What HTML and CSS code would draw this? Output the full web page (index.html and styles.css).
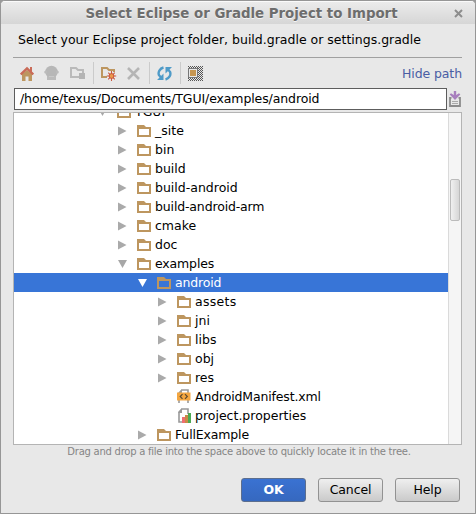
FILE: index.html
```html
<!DOCTYPE html>
<html lang="en">
<head>
<meta charset="utf-8">
<title>Select Eclipse or Gradle Project to Import</title>
<link rel="stylesheet" href="styles.css">
</head>
<body>
<svg class="defs" width="0" height="0" aria-hidden="true">
  <symbol id="folder" viewBox="0 0 14 12"><path fill="#bd965f" fill-rule="evenodd" d="M0 0H7L9 2H14V12H0ZM2 4V10H12V4Z"/></symbol>
  <symbol id="right" viewBox="0 0 9 10"><path fill="#aaa" d="M0 0.5L8.5 5L0 9.5Z"/></symbol>
  <symbol id="down" viewBox="0 0 9 10"><path fill="currentColor" d="M0 1H9L4.5 9Z"/></symbol>
</svg>
<div class="window">
  <header class="titlebar"><h1>Select Eclipse or Gradle Project to Import</h1>
    <svg class="close" width="9" height="9" viewBox="0 0 9 9"><path d="M1 1L8 8M8 1L1 8"/></svg>
  </header>
  <main class="content">
    <p class="prompt"><span>Select your Eclipse project folder, build.gradle or settings.gradle</span></p>
    <div class="toolbar">
      <svg class="home" width="14" height="15" viewBox="0 0 14 15"><path fill="#bd965f" d="M2 8L7 4L12 8V15H8.5V10.5H5.5V15H2Z"/><path fill="none" stroke="#c96b58" stroke-width="2.4" d="M.7 8.5L7 2.5L13.3 8.5"/><path fill="#c96b58" d="M10 1H12V7H10Z"/></svg>
      <svg class="project" width="15" height="16" viewBox="0 0 15 16"><circle cx="7.5" cy="7" r="6.2" fill="#b7b7b7"/><circle cx="1.8" cy="7" r="1.6" fill="#bbb"/><circle cx="13.2" cy="7" r="1.6" fill="#bbb"/><path fill="#bbb" d="M3 11H12V15H3Z"/><path fill="none" stroke="#c9c9c9" d="M5 11.5H10"/></svg>
      <svg class="module" width="16" height="14" viewBox="0 0 16 14"><path fill="none" stroke="#bababa" stroke-width="2" d="M9 11H1V2H6L8 4H13V7"/><path fill="#b4b4b4" d="M9 7H15V13H9Z"/></svg>
      <i class="divider"></i>
      <svg class="new" width="16" height="15" viewBox="0 0 16 15"><path fill="none" stroke="#bd965f" stroke-width="2" d="M6 11H1V2H6L8 4H13V6"/><path stroke="#c95a42" stroke-width="1.1" d="M10.5 5V15M5.8 10H15.2M7.2 6.7L13.8 13.3M13.8 6.7L7.2 13.3"/><circle cx="10.5" cy="10" r="2.4" fill="#eb9a4c" stroke="#c95038"/></svg>
      <svg class="delete" width="13" height="13" viewBox="0 0 13 13"><path fill="none" stroke="#b5b5b5" stroke-width="2.6" d="M1 1L12 12M12 1L1 12"/></svg>
      <i class="divider"></i>
      <svg class="refresh" width="15" height="15" viewBox="0 0 15 15"><g fill="none" stroke="#4f9bc8" stroke-width="2.4"><path d="M6.5 1.5C2.8 2.5 .7 6 2 9.2L4.5 12"/><path d="M8.5 13.5C12.2 12.5 14.3 9 13 5.8L10.5 3"/></g><path fill="#4f9bc8" d="M0 14H6.5V7.5ZM15 1H8.5V7.5Z"/></svg>
      <i class="divider"></i>
      <svg class="hidden" width="15" height="15" viewBox="0 0 15 15" shape-rendering="crispEdges"><defs><pattern id="checks" width="2" height="2" patternUnits="userSpaceOnUse"><path fill="#555" d="M0 0H1V1H0ZM1 1H2V2H1Z"/></pattern></defs><path fill="url(#checks)" d="M0 0H15V15H0Z"/><path fill="#e8e8e8" stroke="#777" d="M.5 2.5H9.5V11.5H.5Z"/><path fill="#c79650" d="M2 4H8V10H2Z"/></svg>
      <a class="hide">Hide path</a>
    </div>
    <div class="pathrow">
      <div class="path"><span>/home/texus/Documents/TGUI/examples/android</span></div>
      <svg width="12" height="16" viewBox="0 0 12 16"><path fill="none" stroke="#8c8c8c" stroke-width="1.8" d="M2.5 6.8H1V15H11V6.8H9.5"/><path stroke="#aaa" d="M3 10.5H9M3 12.5H9"/><path fill="#a87fbe" d="M4.8 0H7.2V4L10 2.2L11.3 3.6L6 9L.7 3.6L2 2.2L4.8 4Z"/></svg>
    </div>
    <div class="tree">
      <ul class="rows">
        <li class="l0"><svg class="arrow"><use href="#down"/></svg><svg class="icon"><use href="#folder"/></svg><span>TGUI</span></li>
        <li class="l1"><svg class="arrow"><use href="#right"/></svg><svg class="icon"><use href="#folder"/></svg><span>_site</span></li>
        <li class="l1"><svg class="arrow"><use href="#right"/></svg><svg class="icon"><use href="#folder"/></svg><span>bin</span></li>
        <li class="l1"><svg class="arrow"><use href="#right"/></svg><svg class="icon"><use href="#folder"/></svg><span>build</span></li>
        <li class="l1"><svg class="arrow"><use href="#right"/></svg><svg class="icon"><use href="#folder"/></svg><span>build-android</span></li>
        <li class="l1"><svg class="arrow"><use href="#right"/></svg><svg class="icon"><use href="#folder"/></svg><span class="tight">build-android-arm</span></li>
        <li class="l1"><svg class="arrow"><use href="#right"/></svg><svg class="icon"><use href="#folder"/></svg><span>cmake</span></li>
        <li class="l1"><svg class="arrow"><use href="#right"/></svg><svg class="icon"><use href="#folder"/></svg><span>doc</span></li>
        <li class="l1"><svg class="arrow"><use href="#down"/></svg><svg class="icon"><use href="#folder"/></svg><span class="tight">examples</span></li>
        <li class="l2 selected"><svg class="arrow"><use href="#down"/></svg><svg class="icon"><use href="#folder"/></svg><span class="tight">android</span></li>
        <li class="l3"><svg class="arrow"><use href="#right"/></svg><svg class="icon"><use href="#folder"/></svg><span class="loose">assets</span></li>
        <li class="l3"><svg class="arrow"><use href="#right"/></svg><svg class="icon"><use href="#folder"/></svg><span>jni</span></li>
        <li class="l3"><svg class="arrow"><use href="#right"/></svg><svg class="icon"><use href="#folder"/></svg><span>libs</span></li>
        <li class="l3"><svg class="arrow"><use href="#right"/></svg><svg class="icon"><use href="#folder"/></svg><span>obj</span></li>
        <li class="l3"><svg class="arrow"><use href="#right"/></svg><svg class="icon"><use href="#folder"/></svg><span>res</span></li>
        <li class="l3"><i class="arrow"></i><svg class="icon file" viewBox="0 0 14 15"><path fill="none" stroke="#999" stroke-width="1.6" d="M2 14V4L5 1H11V14"/><path fill="#999" d="M1 5L5 0V5Z"/><path fill="#f4a640" d="M0 3.5H13.5V11.5H0Z"/><path fill="none" stroke="#5c4a30" stroke-width="1.2" d="M5.5 5.2L3.2 7.5L5.5 9.8M8 5.2L10.3 7.5L8 9.8"/></svg><span class="tight">AndroidManifest.xml</span></li>
        <li class="l3"><i class="arrow"></i><svg class="icon file" viewBox="0 0 14 15"><path fill="none" stroke="#999" stroke-width="1.6" d="M5 14H2V4L5 1H11V6"/><path fill="#999" d="M1 5L5 0V5Z"/><path fill="#ef6e70" d="M5 9H8V15H5Z"/><path fill="#c78b48" d="M8 7H11V15H8Z"/><path fill="#4ca953" d="M11 5H14V15H11Z"/></svg><span>project.properties</span></li>
        <li class="l2"><svg class="arrow"><use href="#right"/></svg><svg class="icon"><use href="#folder"/></svg><span class="tight">FullExample</span></li>
      </ul>
      <div class="scrollbar"><div class="thumb"></div></div>
    </div>
    <p class="hint"><span>Drag and drop a file into the space above to quickly locate it in the tree.</span></p>
    <footer class="actions"><button class="ok">OK</button><button>Cancel</button><button>Help</button></footer>
  </main>
</div>
</body>
</html>
```
FILE: styles.css
```css
* { box-sizing: border-box; }
body { margin: 0; font: 12.5px/19px "DejaVu Sans", sans-serif; color: #000; background: #999; }
.defs { position: absolute; }
.window { width: 476px; height: 514px; border: 1px solid #969696; border-radius: 5px 5px 0 0; background: #e8e8e8; overflow: hidden; }
.titlebar { height: 23px; display: grid; grid-template-columns: 1fr 9px; align-items: center; padding: 0 12px 0 28px; background: linear-gradient(#ebebeb, #d6d6d6); border-top: 1px solid #fafafa; }
h1 { margin: 0; padding-top: 1px; text-align: center; white-space: nowrap; font-size: 13.35px; line-height: 20px; color: #6d6d6d; text-shadow: 0 1px #f5f5f5; }
.close { margin-top: 1px; fill: none; stroke: #8d8d8d; stroke-width: 2; }
.content { padding: 0 13px 0 12px; }
.prompt { margin: 0; height: 34px; padding: 6px 0 0 5px; border-bottom: 1px solid #a0a0a0; white-space: nowrap; }
.toolbar { height: 30px; display: flex; align-items: center; padding-left: 7px; }
.divider { width: 1px; height: 22px; background: #cbcbcb; }
.project { margin-left: 10px; }
.module { margin-left: 11px; }
.module + .divider { margin-left: 7px; }
.new { margin-left: 7px; }
.delete { margin-left: 10px; }
.delete + .divider { margin-left: 9px; }
.refresh { margin-left: 7px; }
.refresh + .divider { margin-left: 8px; }
.hidden { margin-left: 7px; }
.hide { margin-left: auto; color: #4a5da4; white-space: nowrap; letter-spacing: -.1px; }
.pathrow { height: 22px; display: flex; align-items: center; gap: 2px; padding-left: 1px; }
.path { width: 433px; height: 22px; flex: none; padding: 0 5px; border: 1px solid #5d5d5d; background: #fff; line-height: 20px; white-space: nowrap; letter-spacing: -.11px; }
.pathrow svg { flex: none; }
.tree { height: 333px; margin-top: 2px; display: flex; border: 1px solid #b4b4b4; background: #fff; overflow: hidden; }
.rows { flex: 1; list-style: none; margin: -11px 0 0; padding: 0; }
.rows li { height: 19px; display: flex; align-items: center; white-space: nowrap; }
.l0 { padding-left: 84px; }
.l1 { padding-left: 104px; }
.l2 { padding-left: 124px; }
.l3 { padding-left: 144px; }
.arrow { width: 9px; height: 10px; flex: none; color: #a7a7a7; }
.icon { width: 14px; height: 12px; flex: none; margin: 0 4px 0 10px; }
.file { height: 15px; }
.tight { letter-spacing: -.15px; }
.loose { letter-spacing: .3px; }
.selected { background: #3875d7; color: #fff; }
.selected .arrow { color: #fff; }
.scrollbar { width: 13px; border-left: 1px solid #dadada; background: #f5f5f5; padding: 66px 1px 0; }
.thumb { height: 42px; border: 1px solid #bbb; border-radius: 2px; background: linear-gradient(90deg, #f0f0f0, #d6d6d6); }
.hint { margin: 0; height: 33px; padding-left: 3px; line-height: 13px; font-size: 10px; letter-spacing: -.25px; color: #858585; text-align: center; white-space: nowrap; }
.actions { display: flex; justify-content: flex-end; gap: 12px; padding-right: 2px; }
button { width: 65px; height: 24px; padding: 0; font: 12.5px/20px "DejaVu Sans", sans-serif; letter-spacing: -.1px; border: 1px solid #929292; border-radius: 3px; background: linear-gradient(#efefef, #cacaca); color: #000; }
.ok { border-color: #5c6e8e; background: linear-gradient(#3a72d2, #3668bf); color: #fff; font-weight: bold; }
```
